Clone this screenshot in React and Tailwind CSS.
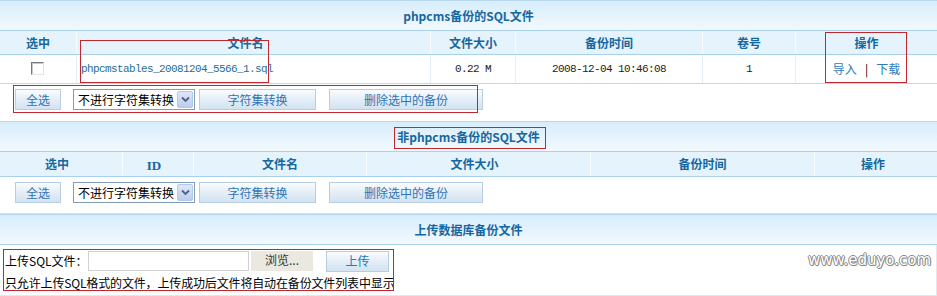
import React from "react";

const cjk = "font-['Noto_Sans_CJK_SC','Noto_Sans_CJK_JP',sans-serif]";
const mono = "font-['Liberation_Mono','DejaVu_Sans_Mono',monospace] text-[11px] tracking-[-0.6px]";

function TitleBar({ children }) {
  return (
    <div className="h-[31px] border-t border-t-[#b9d7ea] border-b border-b-[#a7d1ec] bg-linear-to-b from-[#d7edfb] to-[#f2f9fe] flex items-center justify-center text-[12px] font-bold text-[#15679f]">
      {children}
    </div>
  );
}

function Btn({ w, children }) {
  return (
    <div
      className={`${w} h-[21px] shrink-0 border border-[#b7cee0] bg-linear-to-b from-[#fafcfe] via-[#e4eef7] to-[#d2e3f1] flex items-center justify-center text-[12px] leading-none text-[#2f74b5]`}
    >
      {children}
    </div>
  );
}

function CharsetSelect() {
  return (
    <div className="w-[122px] h-[21px] shrink-0 border border-[#7f9db9] bg-white flex items-center justify-between pl-[4px] pr-[1px]">
      <span className="text-[12px] leading-none text-black">不进行字符集转换</span>
      <span className="w-[16px] h-[17px] rounded-[2px] border border-[#b6c8e6] bg-linear-to-b from-[#dde7f8] to-[#bccdec] flex items-center justify-center">
        <svg width="9" height="7" viewBox="0 0 9 7">
          <path d="M1 1.5 L4.5 5 L8 1.5" fill="none" stroke="#4d6185" strokeWidth="1.8" />
        </svg>
      </span>
    </div>
  );
}

function ButtonRow() {
  return (
    <>
      <Btn w="w-[46px]">全选</Btn>
      <div className="w-[12px]" />
      <CharsetSelect />
      <div className="w-[4px]" />
      <Btn w="w-[117px]">字符集转换</Btn>
      <div className="w-[13px]" />
      <Btn w="w-[154px]">删除选中的备份</Btn>
    </>
  );
}

function Checkbox() {
  return (
    <div className="w-[13px] h-[13px] border border-t-[#7a7a7a] border-l-[#7a7a7a] border-r-[#e4e4e4] border-b-[#e4e4e4] bg-white shadow-[inset_1px_1px_0_#c8c8c8]" />
  );
}

export default function App() {
  return (
    <div className={`relative w-[937px] h-[296px] bg-white overflow-hidden ${cjk}`}>
      {/* section 1 */}
      <TitleBar>phpcms备份的SQL文件</TitleBar>
      <div className="grid grid-cols-[76px_354px_85px_187px_93px_1fr] h-[24px] bg-[#e5f3fc] border-b border-[#a9d1ec] text-[12px] font-bold text-[#15679f]">
        <div className="flex items-center justify-center">选中</div>
        <div className="flex items-center justify-center border-l border-[#f6fbfe] pr-[16px]">文件名</div>
        <div className="flex items-center justify-center border-l border-[#f6fbfe]">文件大小</div>
        <div className="flex items-center justify-center border-l border-[#f6fbfe]">备份时间</div>
        <div className="flex items-center justify-center border-l border-[#f6fbfe]">卷号</div>
        <div className="flex items-center justify-center border-l border-[#f6fbfe]">操作</div>
      </div>
      <div className="grid grid-cols-[76px_354px_85px_187px_93px_1fr] h-[29px] bg-white border-b border-[#b9dbf0] text-[12px]">
        <div className="flex items-center justify-center pb-[2px]">
          <div className="-ml-[2px]">
            <Checkbox />
          </div>
        </div>
        <div className={`flex items-center pl-[4px] border-l border-[#e3eef6] text-[#1f6e92] ${mono}`}>
          phpcmstables_20081204_5566_1.sql
        </div>
        <div className={`flex items-center justify-center border-l border-[#e3eef6] text-[#222] ${mono}`}>0.22 M</div>
        <div className={`flex items-center justify-center border-l border-[#e3eef6] text-[#222] ${mono}`}>
          2008-12-04 10:46:08
        </div>
        <div className={`flex items-center justify-center border-l border-[#e3eef6] text-[#222] ${mono}`}>1</div>
        <div className="flex items-center justify-center border-l border-[#e3eef6] text-[#2d7bb9]">
          <span>导入</span>
          <span className="mx-[8px] text-black">|</span>
          <span>下载</span>
        </div>
      </div>
      <div className="h-[30px] flex items-center pl-[15px] pt-[1px]">
        <ButtonRow />
      </div>
      <div className="h-[7px]" />

      {/* section 2 */}
      <TitleBar>非phpcms备份的SQL文件</TitleBar>
      <div className="grid grid-cols-[122px_71px_173px_224px_224px_1fr] h-[25px] bg-[#e5f3fc] border-b border-[#a9d1ec] text-[12px] font-bold text-[#15679f]">
        <div className="flex items-center justify-center pr-[8px]">选中</div>
        <div className="flex items-center justify-center border-l border-[#f6fbfe] pt-[3px] pr-[8px] font-['Liberation_Serif',serif] text-[13px]">ID</div>
        <div className="flex items-center justify-center border-l border-[#f6fbfe]">文件名</div>
        <div className="flex items-center justify-center border-l border-[#f6fbfe] pr-[8px]">文件大小</div>
        <div className="flex items-center justify-center border-l border-[#f6fbfe]">备份时间</div>
        <div className="flex items-center justify-center border-l border-[#f6fbfe] pr-[6px]">操作</div>
      </div>
      <div className="h-[37px] flex items-start pl-[15px] pt-[5px] border-b border-[#d9e2e8]">
        <ButtonRow />
      </div>

      {/* section 3 */}
      <TitleBar>上传数据库备份文件</TitleBar>
      <div className="h-[51px] border-b border-r border-[#e1e8ee] pl-[5px] pt-[6px] text-[12px] text-black">
        <div className="flex items-center h-[20px]">
          <span className="w-[83px] leading-none">上传SQL文件：</span>
          <div className="w-[161px] h-[20px] border border-[#d0d0d0] bg-white" />
          <div className="w-[2px]" />
          <div className="w-[62px] h-[20px] bg-[#ebe9df] flex items-center justify-center text-[#333] leading-none pb-[3px]">
            浏览...
          </div>
          <div className="w-[13px]" />
          <Btn w="w-[63px]">上传</Btn>
        </div>
        <div className="mt-[3px] leading-[18px] tracking-[-0.15px]">
          只允许上传SQL格式的文件，上传成功后文件将自动在备份文件列表中显示
        </div>
      </div>

      {/* watermark */}
      <div className="absolute left-[808px] top-[253px] font-['DejaVu_Sans',sans-serif] text-[15px] leading-none text-white [text-shadow:1px_0_0_#8a8a8a,-1px_0_0_#8a8a8a,0_1px_0_#8a8a8a,0_-1px_0_#8a8a8a,1px_1px_1px_#999]">
        www.eduyo.com
      </div>

      {/* red annotation boxes */}
      <div className="absolute left-[80px] top-[40px] w-[189px] h-[43px] border border-[#c1272d]" />
      <div className="absolute left-[825px] top-[32px] w-[82px] h-[51px] border border-[#c1272d]" />
      <div className="absolute left-[13px] top-[85px] w-[465px] h-[28px] border border-[#c1272d]" />
      <div className="absolute left-[394px] top-[127px] w-[152px] h-[22px] border border-[#c1272d]" />
      <div className="absolute left-[3px] top-[249px] w-[391px] h-[42px] border border-[#c1272d]" />
    </div>
  );
}
